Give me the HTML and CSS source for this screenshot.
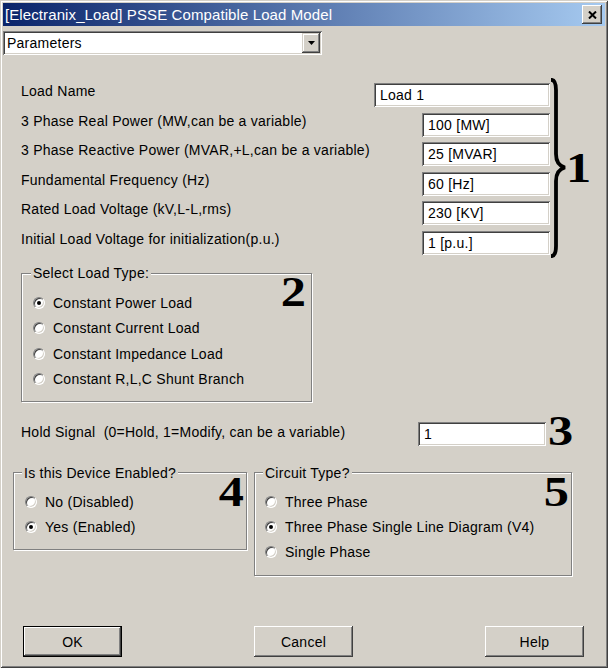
FILE: index.html
```html
<!DOCTYPE html>
<html>
<head>
<meta charset="utf-8">
<title>[Electranix_Load] PSSE Compatible Load Model</title>
<link rel="stylesheet" href="styles.css">
</head>
<body>
<div class="window">
  <div class="titlebar">
    <span class="title-text">[Electranix_Load] PSSE Compatible Load Model</span>
    <span class="close-btn"><svg width="9" height="8" viewBox="0 0 9 8"><path d="M1 0.5 L8 7.5 M8 0.5 L1 7.5" stroke="#000" stroke-width="2"/></svg></span>
  </div>

  <div class="dropdown">
    <span class="dropdown-text">Parameters</span>
    <span class="dropdown-btn"><svg width="7" height="4" viewBox="0 0 7 4"><path d="M0 0 H7 L3.5 4 Z" fill="#000"/></svg></span>
  </div>

  <div class="params">
    <div class="fields">
      <div class="field"><span class="field-label">Load Name</span><span class="input input-wide">Load 1</span></div>
      <div class="field"><span class="field-label">3 Phase Real Power (MW,can be a variable)</span><span class="input input-narrow">100 [MW]</span></div>
      <div class="field"><span class="field-label">3 Phase Reactive Power (MVAR,+L,can be a variable)</span><span class="input input-narrow">25 [MVAR]</span></div>
      <div class="field"><span class="field-label">Fundamental Frequency (Hz)</span><span class="input input-narrow">60 [Hz]</span></div>
      <div class="field"><span class="field-label">Rated Load Voltage (kV,L-L,rms)</span><span class="input input-narrow">230 [KV]</span></div>
      <div class="field"><span class="field-label">Initial Load Voltage for initialization(p.u.)</span><span class="input input-narrow">1 [p.u.]</span></div>
    </div>
    <svg class="brace" width="16" height="180" viewBox="0 0 16 180">
      <path d="M1 1.8 C4.5 1.8 6 5 6 12 L6 76 C6 84 9 88 15 89.5 C9 91 6 95 6 103 L6 168 C6 175 4.5 178.2 1 178.2" fill="none" stroke="#000" stroke-width="3.8"/>
    </svg>
    <span class="digit digit-1">1</span>
  </div>

  <fieldset class="group group-load">
    <legend>Select Load Type:</legend>
    <div class="group-body">
      <div class="radio-row"><span class="radio checked"></span><span class="radio-label">Constant Power Load</span></div>
      <div class="radio-row"><span class="radio"></span><span class="radio-label">Constant Current Load</span></div>
      <div class="radio-row"><span class="radio"></span><span class="radio-label">Constant Impedance Load</span></div>
      <div class="radio-row"><span class="radio"></span><span class="radio-label">Constant R,L,C Shunt Branch</span></div>
      <span class="digit digit-2">2</span>
    </div>
  </fieldset>

  <div class="holdrow">
    <span class="hold-label">Hold Signal  (0=Hold, 1=Modify, can be a variable)</span>
    <span class="input input-hold">1</span>
    <span class="digit digit-3">3</span>
  </div>

  <div class="groups">
    <fieldset class="group group-enabled">
      <legend>Is this Device Enabled?</legend>
      <div class="group-body">
        <div class="radio-row"><span class="radio"></span><span class="radio-label">No (Disabled)</span></div>
        <div class="radio-row"><span class="radio checked"></span><span class="radio-label">Yes (Enabled)</span></div>
        <span class="digit digit-4">4</span>
      </div>
    </fieldset>
    <fieldset class="group group-circuit">
      <legend>Circuit Type?</legend>
      <div class="group-body">
        <div class="radio-row"><span class="radio"></span><span class="radio-label">Three Phase</span></div>
        <div class="radio-row"><span class="radio checked"></span><span class="radio-label">Three Phase Single Line Diagram (V4)</span></div>
        <div class="radio-row"><span class="radio"></span><span class="radio-label">Single Phase</span></div>
        <span class="digit digit-5">5</span>
      </div>
    </fieldset>
  </div>

  <div class="buttons">
    <span class="btn btn-default">OK</span>
    <span class="btn">Cancel</span>
    <span class="btn">Help</span>
  </div>
</div>
</body>
</html>
```

FILE: styles.css
```css
* { box-sizing: border-box; }
html, body { margin: 0; padding: 0; }
body {
  width: 608px;
  height: 668px;
  overflow: hidden;
  background: #d4d0c8;
  font-family: "Liberation Sans", Arial, sans-serif;
  font-size: 14px;
  letter-spacing: 0.25px;
  color: #000;
}

.window {
  width: 608px;
  height: 668px;
  padding: 3px;
  display: flex;
  flex-direction: column;
  align-items: flex-start;
  background: #d4d0c8;
  box-shadow: inset 1px 1px #d4d0c8, inset -1px -1px #404040, inset 2px 2px #fff, inset -2px -2px #808080;
}

/* title bar */
.titlebar {
  align-self: stretch;
  height: 23px;
  display: flex;
  align-items: center;
  justify-content: space-between;
  padding: 0 3px 0 2px;
  background: linear-gradient(to right, #0a246a, #a6caf0);
}
.title-text {
  color: #fff;
  font-size: 15px;
  letter-spacing: 0.1px;
  line-height: 23px;
  white-space: nowrap;
}
.close-btn {
  width: 20px;
  height: 19px;
  display: flex;
  align-items: center;
  justify-content: center;
  background: #d4d0c8;
  box-shadow: inset -1px -1px #404040, inset 1px 1px #fff, inset -2px -2px #808080, inset 2px 2px #d4d0c8;
}
.close-btn svg { display: block; }

/* sunken controls */
.dropdown, .input {
  background: #fff;
  box-shadow: inset 1px 1px #808080, inset -1px -1px #fff, inset 2px 2px #404040, inset -2px -2px #d4d0c8;
}

.dropdown {
  margin-top: 5px;
  width: 319px;
  height: 24px;
  padding: 2px;
  display: flex;
  align-items: center;
  justify-content: space-between;
}
.dropdown-text {
  padding-left: 2px;
  line-height: 20px;
}
.dropdown-btn {
  width: 18px;
  height: 20px;
  display: flex;
  align-items: center;
  justify-content: center;
  background: #d4d0c8;
  box-shadow: inset -1px -1px #404040, inset 1px 1px #d4d0c8, inset -2px -2px #808080, inset 2px 2px #fff;
}
.dropdown-btn svg { display: block; }

/* parameter fields */
.params {
  display: flex;
  align-items: flex-start;
  margin-top: 23px;
  margin-left: 18px;
}
.fields {
  width: 529px;
  margin-top: 5px;
  display: flex;
  flex-direction: column;
  gap: 5.6px;
}
.field {
  height: 24px;
  display: flex;
  justify-content: space-between;
  align-items: flex-start;
}
.field-label {
  line-height: 16px;
  white-space: nowrap;
}
.input {
  height: 24px;
  padding: 2px 4px 0 6px;
  line-height: 20px;
  white-space: nowrap;
}
.input-wide { width: 176px; }
.input-narrow { width: 128px; }
.brace { display: block; flex: none; }

.digit {
  font-family: "Liberation Serif", "Times New Roman", serif;
  font-weight: bold;
  font-size: 42px;
  line-height: 42px;
  letter-spacing: 0;
  transform: scaleX(1.2);
}
.digit-1 {
  margin-top: 69px;
  transform-origin: left center;
}

/* group boxes */
.group {
  margin: 0;
  min-width: 0;
  border: 1px solid #808080;
  box-shadow: inset 1px 1px #fff, 1px 1px #fff;
}
.group legend {
  padding: 0 2px;
  margin-left: -2px;
  line-height: 16px;
  background: #d4d0c8;
  white-space: nowrap;
}
.group-body {
  position: relative;
  display: flex;
  flex-direction: column;
}
.group-load {
  margin-top: 7px;
  margin-left: 18px;
  width: 291px;
  padding: 9.5px 0 9px 11px;
}
.radio-row {
  height: 25.33px;
  display: flex;
  align-items: center;
  gap: 8px;
}
.radio-label {
  line-height: 16px;
  white-space: nowrap;
}
.radio {
  position: relative;
  flex: none;
  width: 12px;
  height: 12px;
  border-radius: 50%;
  background: #fff;
  border: 1px solid;
  border-color: #808080 #fff #fff #808080;
  box-shadow: inset 1px 1px #404040, inset -1px -1px #d4d0c8;
}
.radio.checked::after {
  content: "";
  position: absolute;
  left: 3px;
  top: 3px;
  width: 4px;
  height: 4px;
  border-radius: 50%;
  background: #000;
}

.digit-2, .digit-4, .digit-5 {
  position: absolute;
  transform-origin: right center;
}
.digit-2 {
  right: 5px;
  top: -20px;
}

/* hold signal */
.holdrow {
  display: flex;
  align-items: center;
  height: 32px;
  margin-top: 16px;
  margin-left: 18px;
}
.hold-label {
  width: 397px;
  white-space: pre;
  line-height: 16px;
  margin-bottom: 4px;
}
.input-hold { width: 128px; }
.digit-3 {
  margin-left: 2px;
  margin-bottom: 5px;
  transform-origin: left center;
}

/* lower groups */
.groups {
  display: flex;
  align-items: flex-start;
  gap: 7px;
  margin-top: 15px;
  margin-left: 10px;
}
.group-enabled {
  width: 234px;
  padding: 8.3px 0 9px 11px;
}
.group-enabled legend { margin-left: -3px; }
.group-circuit {
  width: 318px;
  padding: 8.3px 0 9.5px 10px;
}
.digit-4 {
  right: 2px;
  top: -18px;
}
.digit-5 {
  right: 2px;
  top: -18px;
}

/* buttons */
.buttons {
  align-self: stretch;
  margin-top: auto;
  margin-bottom: 8px;
  padding: 0 21px 0 20px;
  display: flex;
  justify-content: space-between;
}
.btn {
  width: 99px;
  height: 31px;
  display: flex;
  align-items: center;
  justify-content: center;
  background: #d4d0c8;
  box-shadow: inset -1px -1px #404040, inset 1px 1px #fff, inset -2px -2px #808080, inset 2px 2px #d4d0c8;
}
.btn-default {
  border: 1px solid #000;
}
```
